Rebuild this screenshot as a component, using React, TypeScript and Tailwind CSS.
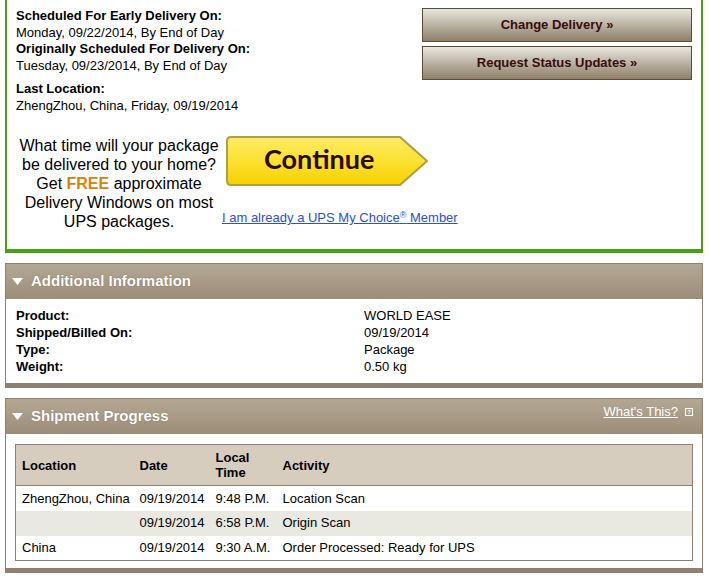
import React from "react";

const rows = [
  { loc: "ZhengZhou, China", date: "09/19/2014", time: "9:48 P.M.", act: "Location Scan" },
  { loc: "", date: "09/19/2014", time: "6:58 P.M.", act: "Origin Scan" },
  { loc: "China", date: "09/19/2014", time: "9:30 A.M.", act: "Order Processed: Ready for UPS" },
];

const info = [
  ["Product:", "WORLD EASE"],
  ["Shipped/Billed On:", "09/19/2014"],
  ["Type:", "Package"],
  ["Weight:", "0.50 kg"],
];

function Triangle() {
  return (
    <svg width="11" height="8" viewBox="0 0 11 8" className="shrink-0">
      <polygon points="0,0 11,0 5.5,7" fill="#ffffff" />
    </svg>
  );
}

function PanelHeader({ title, right }: { title: string; right?: React.ReactNode }) {
  return (
    <div className="flex h-[35px] items-center justify-between bg-gradient-to-b from-[#b3a794] to-[#9c8d78] pl-[6px] pr-[9px]">
      <div className="flex items-center gap-[8px]">
        <Triangle />
        <span className="text-[15px] font-bold text-white [text-shadow:0_0_1px_rgba(60,40,20,0.5)]">
          {title}
        </span>
      </div>
      {right}
    </div>
  );
}

function BrownButton({ label }: { label: string }) {
  return (
    <div className="flex h-[34px] w-[270px] items-center justify-center border border-[#5c4a32] bg-gradient-to-b from-[#e9e7df] to-[#8e806b] text-[13px] font-bold text-[#3a0c0a]">
      {label}
    </div>
  );
}

function ContinueButton() {
  return (
    <div className="relative ml-[4px] h-[50px] w-[203px]">
      <svg width="203" height="50" viewBox="0 0 203 50" className="absolute inset-0">
        <defs>
          <linearGradient id="yel" x1="0" y1="0" x2="0" y2="1">
            <stop offset="0" stopColor="#fdeb64" />
            <stop offset="0.5" stopColor="#fbe131" />
            <stop offset="1" stopColor="#f6d000" />
          </linearGradient>
        </defs>
        <path
          d="M5 1 H174 L201 25 L174 49 H5 Q1 49 1 45 V5 Q1 1 5 1 Z"
          fill="url(#yel)"
          stroke="#ad9f45"
          strokeWidth="2"
          strokeLinejoin="round"
        />
      </svg>
      <div className="relative flex h-full items-center pb-[3px] pl-[38px] font-['Lato',sans-serif] text-[27px] font-bold text-[#2c0900]">
        Continue
      </div>
    </div>
  );
}

export default function App() {
  return (
    <div className="h-[580px] w-[709px] overflow-hidden bg-white font-['Liberation_Sans',Arial,sans-serif] text-[13px] text-black">
      <div className="mx-[5px] w-[698px] border-x-2 border-b-4 border-[#4a9e18] pb-[18px] pl-[9px] pr-[9px]">
        <div className="flex justify-between">
          <div className="pt-[8px] leading-[16.5px]">
            <div className="font-bold">Scheduled For Early Delivery On:</div>
            <div>Monday, 09/22/2014, By End of Day</div>
            <div className="font-bold">Originally Scheduled For Delivery On:</div>
            <div>Tuesday, 09/23/2014, By End of Day</div>
            <div className="mt-[7px] font-bold">Last Location:</div>
            <div>ZhengZhou, China, Friday, 09/19/2014</div>
          </div>
          <div className="flex flex-col gap-[4px] pt-[8px]">
            <BrownButton label="Change Delivery »" />
            <BrownButton label="Request Status Updates »" />
          </div>
        </div>
        <div className="mt-[22px] flex items-start">
          <div className="w-[206px] text-center text-[16px] leading-[19px]">
            What time will your package be delivered to your home? Get{" "}
            <span className="font-bold text-[#d5830e]">FREE</span> approximate Delivery Windows on most UPS packages.
          </div>
          <div className="flex flex-col">
            <ContinueButton />
            <a className="mt-[24px] leading-[16px] text-[#2c50d0] underline">
              I am already a UPS My Choice<sup className="text-[9px]">®</sup> Member
            </a>
          </div>
        </div>
      </div>

      <div className="mx-[5px] mt-[10px] w-[698px] border-x border-t border-b-[5px] border-[#8e8170]">
        <PanelHeader title="Additional Information" />
        <div className="py-[8px] pl-[10px] leading-[17px]">
          {info.map(([k, v]) => (
            <div key={k} className="flex">
              <div className="w-[348px] font-bold">{k}</div>
              <div>{v}</div>
            </div>
          ))}
        </div>
      </div>

      <div className="mx-[5px] mt-[10px] w-[698px] border-x border-t border-b-[5px] border-[#8e8170]">
        <PanelHeader
          title="Shipment Progress"
          right={
            <div className="flex items-center gap-[7px] pb-[9px]">
              <span className="text-[13px] text-white underline">What's This?</span>
              <span className="flex h-[8px] w-[8px] items-center justify-center border border-white text-[6px] font-bold leading-none text-white">
                ?
              </span>
            </div>
          }
        />
        <div className="px-[9px] pb-[7px] pt-[10px]">
          <table className="w-full border-collapse border border-[#8e8170] text-left">
            <thead>
              <tr className="h-[41px] bg-[#d6cdbf] font-bold leading-[15px]">
                <th className="w-[118px] pl-[6px] font-bold">Location</th>
                <th className="w-[76px] pl-[6px] font-bold">Date</th>
                <th className="w-[67px] pl-[6px] font-bold">
                  Local
                  <br />
                  Time
                </th>
                <th className="pl-[6px] font-bold">Activity</th>
              </tr>
            </thead>
            <tbody>
              {rows.map((r, i) => (
                <tr
                  key={i}
                  className={`h-[25px] ${i === 1 ? "bg-[#e9e8e1]" : "bg-white"} ${i === 0 ? "border-t border-[#8e8170]" : ""}`}
                >
                  <td className="pl-[6px]">{r.loc}</td>
                  <td className="pl-[6px]">{r.date}</td>
                  <td className="pl-[6px]">{r.time}</td>
                  <td className="pl-[6px]">{r.act}</td>
                </tr>
              ))}
            </tbody>
          </table>
        </div>
      </div>
    </div>
  );
}
